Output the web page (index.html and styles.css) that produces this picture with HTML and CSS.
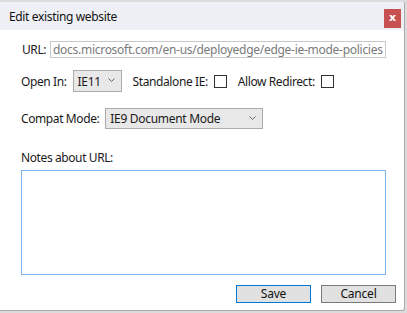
FILE: index.html
```html
<!DOCTYPE html>
<html>
<head>
<meta charset="utf-8">
<link rel="stylesheet" href="styles.css">
</head>
<body>
<div class="dialog">
  <div class="titlebar">
    <span class="title">Edit existing website</span>
    <div class="close">x</div>
  </div>
  <div class="content">
    <div class="row url-row">
      <span class="label">URL:</span>
      <div class="input">docs.microsoft.com/en-us/deployedge/edge-ie-mode-policies</div>
    </div>
    <div class="row open-row">
      <span class="label">Open In:</span>
      <div class="select sel-ie">
        <span>IE11</span>
        <svg class="chev" width="7" height="4" viewBox="0 0 7 4"><polyline points="0.5,0.5 3.5,3.5 6.5,0.5" fill="none" stroke="#666" stroke-width="1"/></svg>
      </div>
      <span class="label lbl-sa">Standalone IE:</span>
      <div class="check chk-sa"></div>
      <span class="label lbl-ar">Allow Redirect:</span>
      <div class="check chk-ar"></div>
    </div>
    <div class="row compat-row">
      <span class="label">Compat Mode:</span>
      <div class="select sel-compat">
        <span>IE9 Document Mode</span>
        <svg class="chev" width="7" height="4" viewBox="0 0 7 4"><polyline points="0.5,0.5 3.5,3.5 6.5,0.5" fill="none" stroke="#666" stroke-width="1"/></svg>
      </div>
    </div>
    <div class="notes-label">Notes about URL:</div>
    <div class="textarea"></div>
    <div class="buttons">
      <div class="btn btn-save">Save</div>
      <div class="btn btn-cancel">Cancel</div>
    </div>
  </div>
</div>
</body>
</html>
```

FILE: styles.css
```css
html, body {
  margin: 0;
  padding: 0;
}
body {
  width: 407px;
  height: 313px;
  background: #dcdcdc;
  font-family: "Noto Sans", "Open Sans", sans-serif;
  font-size: 12px;
  color: #1a1a1a;
  overflow: hidden;
}
.dialog {
  margin-top: 2px;
  width: 404px;
  height: 308px;
  background: #fff;
  border-right: 1px solid #aaaaaa;
  border-bottom: 1px solid #aaaaaa;
  border-left: 1px solid #d0d0d0;
  box-sizing: content-box;
  margin-left: -1px;
  border-bottom-right-radius: 3px;
}
.titlebar {
  height: 28px;
  background: #eff0f6;
  display: flex;
  align-items: center;
  justify-content: space-between;
  padding-left: 9px;
  padding-right: 2px;
}
.title {
  font-size: 12px;
  color: #111;
  letter-spacing: -0.35px;
}
.close {
  width: 17px;
  height: 19px;
  margin-top: 4px;
  margin-right: 1px;
  background: #c75050;
  color: #fff;
  font-weight: bold;
  font-size: 11px;
  line-height: 17px;
  text-align: center;
  font-family: "DejaVu Sans", sans-serif;
}
.content {
  padding-left: 21px;
  padding-right: 18px;
  display: flex;
  flex-direction: column;
}
.row {
  display: flex;
  align-items: center;
}
.label {
  white-space: nowrap;
  letter-spacing: -0.4px;
}
.url-row {
  margin-top: 11px;
}
.url-row .label {
  color: #1a1a1a;
  margin-left: 1px;
  width: 28px;
}
.input {
  flex: 1;
  height: 17px;
  box-sizing: border-box;
  border: 1px solid #c8c8c8;
  color: #7a7a7a;
  padding-left: 2px;
  line-height: 15px;
  white-space: nowrap;
  overflow: hidden;
  letter-spacing: -0.28px;
}
.open-row {
  margin-top: 12px;
}
.select {
  box-sizing: border-box;
  border: 1px solid #acacac;
  background: #e8e8e8;
  display: flex;
  align-items: center;
  justify-content: space-between;
  padding-left: 4px;
  padding-right: 6px;
  letter-spacing: -0.3px;
}
.sel-ie {
  margin-left: 6px;
  width: 49px;
  height: 22px;
}
.chev {
  flex: none;
  margin-top: -2px;
}
.lbl-sa {
  margin-left: 11px;
}
.check {
  width: 13px;
  height: 13px;
  box-sizing: border-box;
  border: 1px solid #333;
  background: #fff;
}
.chk-sa {
  margin-left: 6px;
}
.lbl-ar {
  margin-left: 11px;
}
.chk-ar {
  margin-left: 6px;
}
.compat-row {
  margin-top: 16px;
}
.sel-compat {
  margin-left: 6px;
  width: 158px;
  height: 21px;
}
.notes-label {
  margin-top: 21px;
  height: 16px;
  line-height: 16px;
  letter-spacing: -0.4px;
}
.textarea {
  margin-top: 4px;
  height: 105px;
  box-sizing: border-box;
  border: 1px solid #7eb4ea;
}
.buttons {
  margin-top: 10px;
  margin-right: -10px;
  display: flex;
  justify-content: flex-end;
  gap: 10px;
}
.btn {
  width: 75px;
  height: 18px;
  box-sizing: border-box;
  background: #e1e1e1;
  text-align: center;
  line-height: 16px;
  color: #111;
  letter-spacing: -0.2px;
}
.btn-save {
  border: 1px solid #0078d7;
}
.btn-cancel {
  border: 1px solid #7a7a7a;
}
```
